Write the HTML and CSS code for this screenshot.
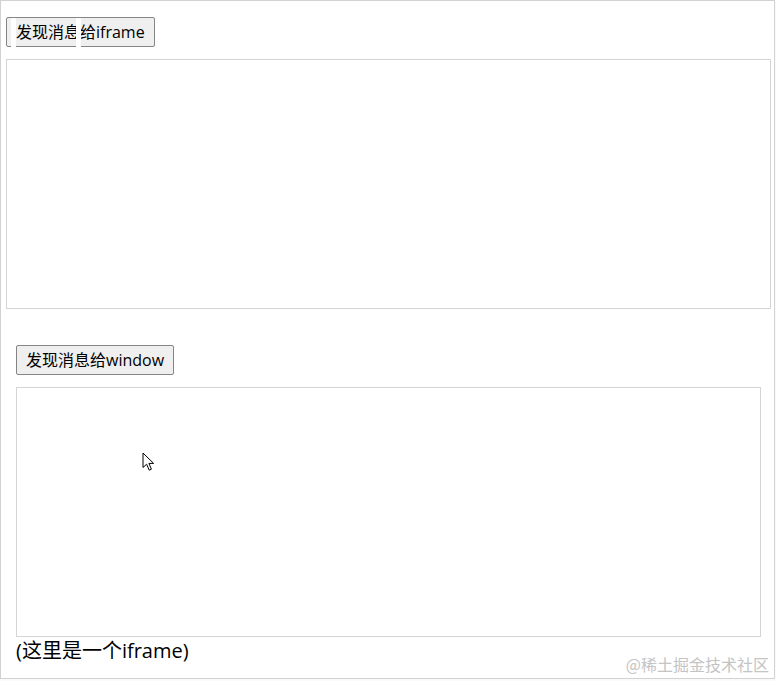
FILE: index.html
```html
<!DOCTYPE html>
<html lang="zh-CN">
<head>
<meta charset="utf-8">
<title>postMessage demo</title>
<link rel="stylesheet" href="styles.css">
</head>
<body>
<div class="page">
  <section class="outer">
    <button class="btn">发现消息给iframe</button>
    <div class="frame frame-outer"></div>
  </section>
  <section class="inner">
    <button class="btn">发现消息给window</button>
    <div class="frame frame-inner"></div>
    <p class="caption">(这里是一个iframe)</p>
  </section>
  <span class="glitch glitch-a"></span>
  <span class="glitch glitch-b"></span>
  <svg class="cursor" width="14" height="20" viewBox="0 0 14 20" aria-hidden="true">
    <path d="M1 1 L1 15.5 L4.6 12.2 L7.2 18.2 L9.4 17.2 L6.9 11.4 L11.6 11.4 Z" fill="#fff" stroke="#000" stroke-width="1" stroke-linejoin="miter"/>
  </svg>
  <span class="watermark">@稀土掘金技术社区</span>
</div>
</body>
</html>
```

FILE: styles.css
```css
html, body {
  margin: 0;
  padding: 0;
  background: #fafafa;
}

body {
  font-family: "Open Sans", "Noto Sans CJK SC", sans-serif;
  color: #000;
}

.page {
  position: relative;
  box-sizing: border-box;
  width: 775px;
  height: 679px;
  border: 1px solid #d2d2d2;
  background: #fff;
  overflow: hidden;
}

.outer {
  padding: 16px 0 0 5px;
}

.inner {
  padding: 36px 0 0 15px;
}

.btn {
  display: block;
  box-sizing: border-box;
  height: 30px;
  margin: 0;
  padding: 0 9px;
  font-family: "Open Sans", "Noto Sans CJK SC", sans-serif;
  font-size: 16px;
  line-height: 1;
  color: #000;
  background: #efefef;
  border: 1px solid #858585;
  border-radius: 2px;
}

.frame {
  box-sizing: border-box;
  height: 250px;
  margin-top: 12px;
  border: 1px solid #d4d4d4;
  background: #fff;
}

.frame-outer {
  width: 765px;
}

.frame-inner {
  width: 745px;
}

.caption {
  margin: 0;
  padding-top: 1px;
  font-size: 20px;
  line-height: 26px;
}

.glitch {
  position: absolute;
  top: 17px;
  width: 5px;
  height: 29px;
  background: #fff;
}

.glitch-a {
  left: 10px;
}

.glitch-b {
  left: 75px;
}

.cursor {
  position: absolute;
  left: 141px;
  top: 451px;
}

.watermark {
  position: absolute;
  right: 5px;
  bottom: 4px;
  font-family: "Noto Sans CJK SC", sans-serif;
  font-size: 16px;
  line-height: 20px;
  color: #c4c4c4;
}
```
